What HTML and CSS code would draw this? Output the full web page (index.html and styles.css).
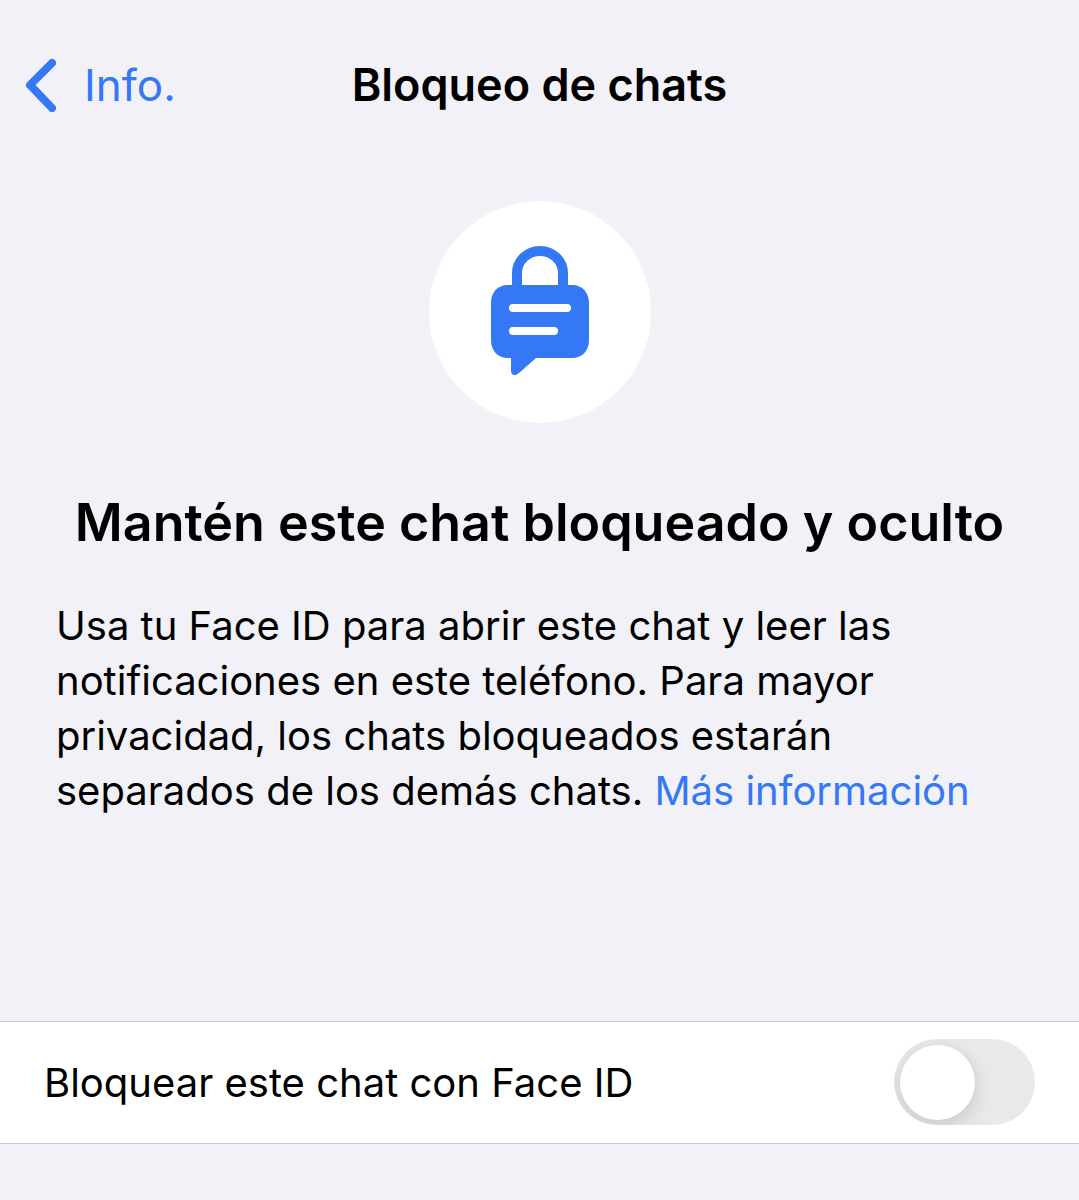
FILE: index.html
```html
<!DOCTYPE html>
<html lang="es">
<head>
    <meta charset="utf-8">
    <meta name="viewport" content="width=device-width, initial-scale=1">
    <title>Bloqueo de chats</title>
    <link rel="stylesheet" href="styles.css">
</head>
<body>
    <header class="navbar">
        <a class="back" href="#info">
            <svg class="back-icon" viewBox="0 0 32 54" aria-hidden="true">
                <path d="M28 5 L6 27 L28 50" />
            </svg>
            Info.
        </a>
        <h1>Bloqueo de chats</h1>
    </header>

    <main>
        <section class="intro">
            <div class="badge">
                <svg class="lock-icon" viewBox="0 0 98 134" aria-hidden="true">
                    <path class="shackle" d="M26 44 V28 A23 22 0 0 1 72 28 V44" />
                    <path class="bubble" d="M17 40 H81 C92 40 98 48 98 58 V95 C98 106 91 113 81 113 H45 L28 128 C25 131 20 131 20 126 V113 H17 C7 113 0 106 0 95 V58 C0 48 6 40 17 40 Z" />
                    <path class="lines" d="M22 63 H76 M22 86 H63" />
                </svg>
            </div>
            <h2>Mantén este chat bloqueado y oculto</h2>
            <p>
                Usa tu Face ID para abrir este chat y leer las notificaciones en este teléfono. Para mayor privacidad, los chats bloqueados estarán separados de los demás chats.
                <a href="#mas">Más información</a>
            </p>
        </section>

        <div class="setting">
            <label for="lock-chat">Bloquear este chat con Face ID</label>
            <input class="switch" type="checkbox" role="switch" id="lock-chat">
        </div>
    </main>
</body>
</html>
```

FILE: styles.css
```css
* {
    margin: 0;
    padding: 0;
    box-sizing: border-box;
}

body {
    font-family: Inter, "Liberation Sans", sans-serif;
    background: #f1f1f7;
    color: #000;
}

a {
    color: #3478f6;
    text-decoration: none;
}

.navbar {
    display: grid;
    grid-template-columns: 1fr auto 1fr;
    align-items: center;
    padding: 56px 24px 0;
    line-height: 58px;
}

.back {
    display: flex;
    align-items: center;
    gap: 28px;
    font-size: 44px;
}

.back-icon {
    width: 32px;
    height: 54px;
    fill: none;
    stroke: #3478f6;
    stroke-width: 8;
    stroke-linecap: round;
    stroke-linejoin: round;
}

h1 {
    font-size: 45px;
    font-weight: 600;
}

.intro {
    padding: 87px 56px 0;
}

.badge {
    display: flex;
    align-items: center;
    justify-content: center;
    width: 222px;
    height: 222px;
    margin: 0 auto;
    border-radius: 50%;
    background: #fff;
}

.lock-icon {
    width: 98px;
    height: 134px;
}

.shackle {
    fill: none;
    stroke: #3478f6;
    stroke-width: 10;
}

.bubble {
    fill: #3478f6;
}

.lines {
    stroke: #fff;
    stroke-width: 8;
    stroke-linecap: round;
}

h2 {
    margin-top: 68px;
    font-size: 52px;
    font-weight: 600;
    line-height: 64px;
    text-align: center;
}

.intro p {
    margin-top: 43px;
    font-size: 40px;
    line-height: 55px;
}

/* Full-width row with the toggle */
.setting {
    display: flex;
    align-items: center;
    justify-content: space-between;
    margin-top: 203px;
    padding: 17px 44px 18px;
    border-top: 1px solid #c9c9cd;
    border-bottom: 1px solid #c9c9cd;
    background: #fff;
    font-size: 40px;
}

.switch {
    appearance: none;
    display: flex;
    flex: none;
    width: 141px;
    height: 86px;
    padding: 6px;
    border-radius: 43px;
    background: #e9e9eb;
    overflow: hidden;
}

.switch::before {
    content: "";
    width: 75px;
    height: 75px;
    border-radius: 50%;
    background: #fff;
    box-shadow: 0 6px 20px rgba(0, 0, 0, 0.15);
}

.switch:checked {
    justify-content: flex-end;
    background: #34c759;
}
```
